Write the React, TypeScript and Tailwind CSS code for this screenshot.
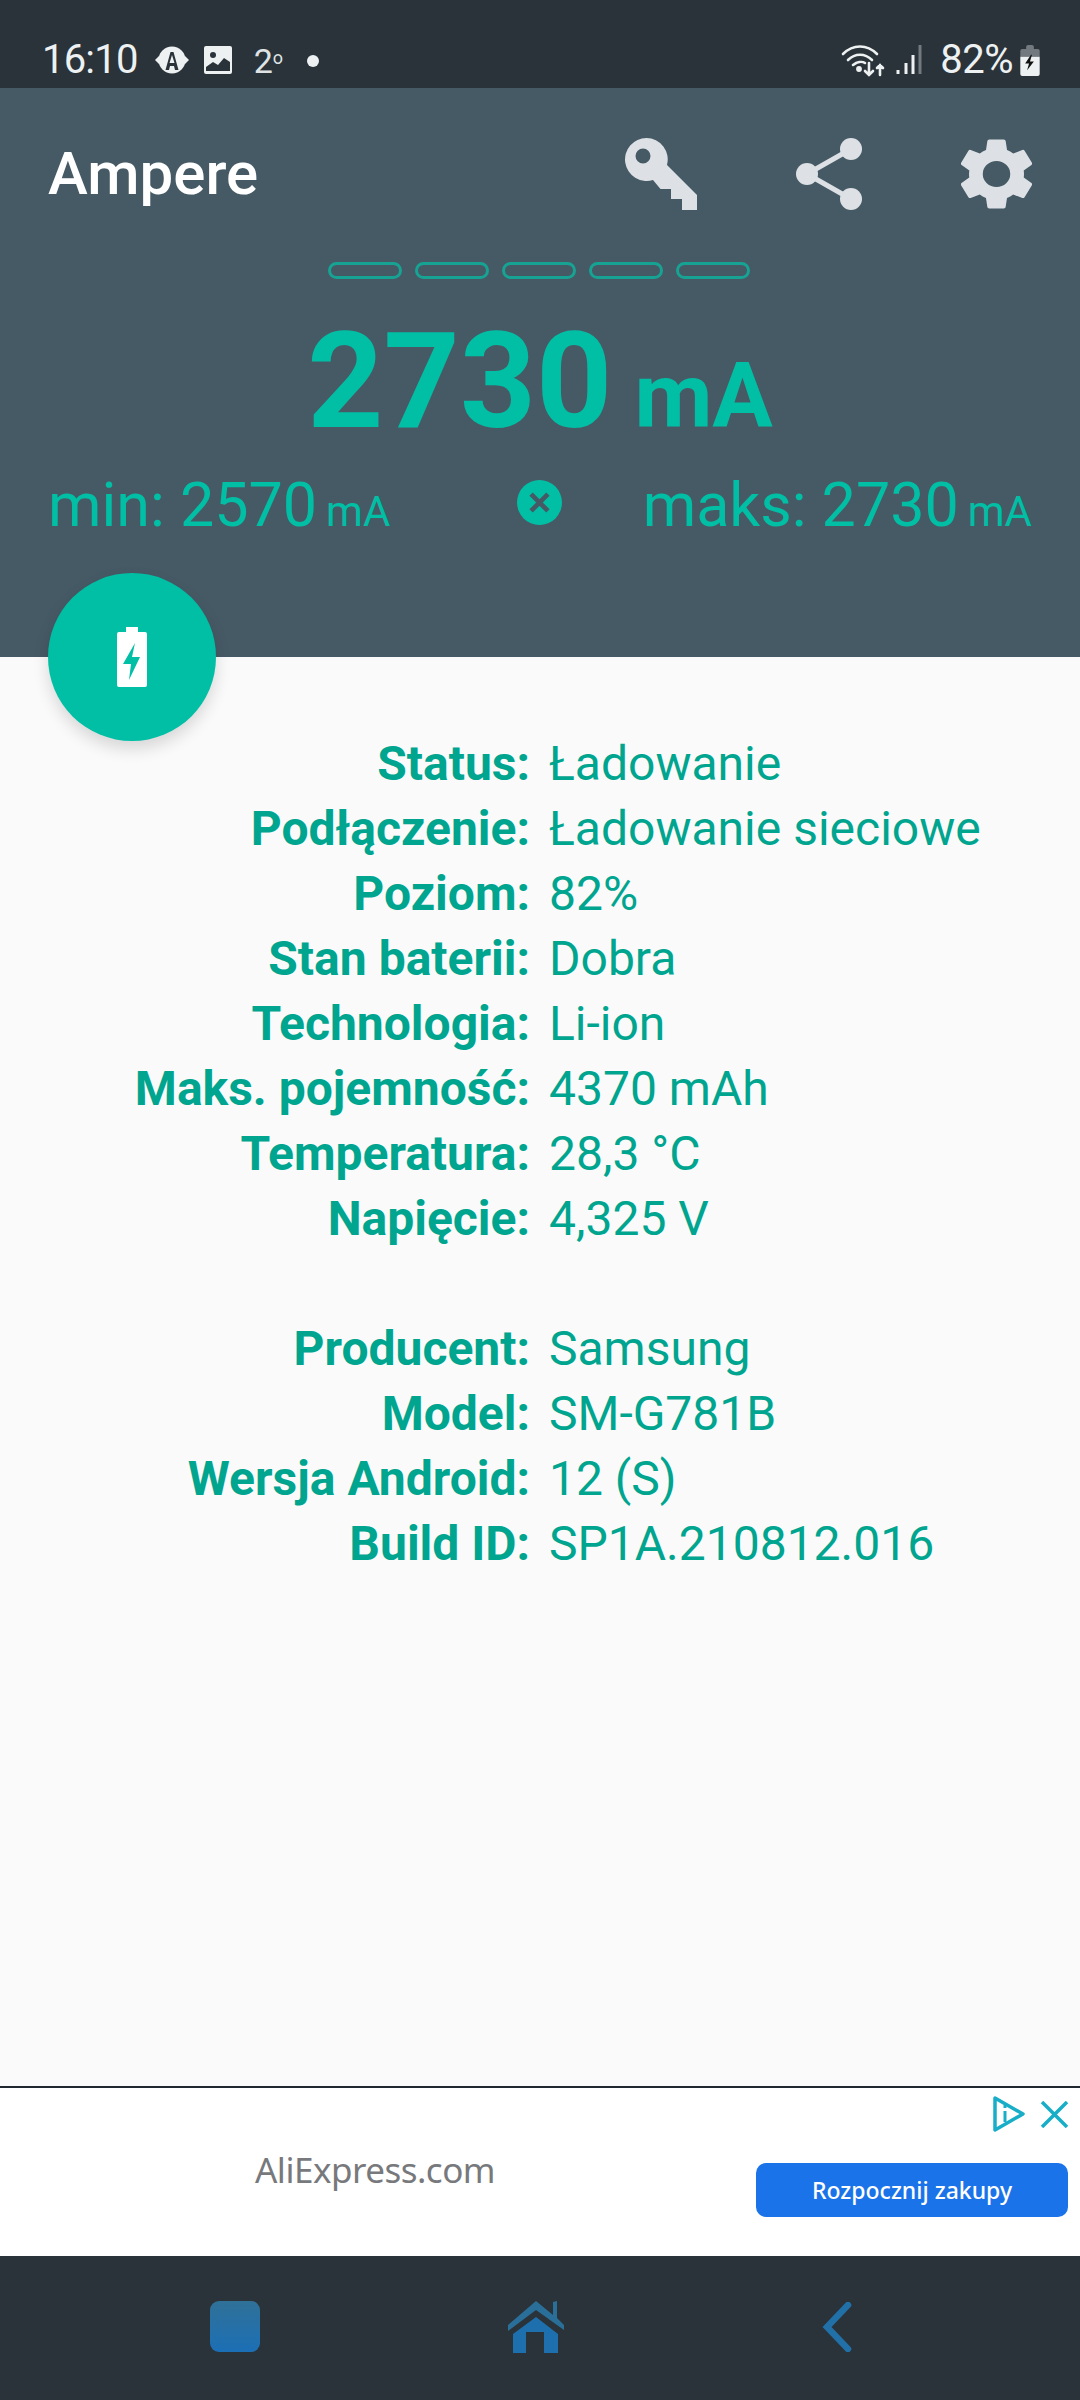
const Pill = () => (
  <div className="w-[74px] h-[17px] rounded-full border-[3px] border-[#16a394]" />
);

type RowProps = { label: string; value: string };

const Row = ({ label, value }: RowProps) => (
  <div className="flex h-[65px] items-center text-[48px] leading-none text-[#00a58f]">
    <div className="w-[530px] shrink-0 text-right font-bold">{label}</div>
    <div className="pl-[19px]">{value}</div>
  </div>
);

const batteryRows: RowProps[] = [
  { label: "Status:", value: "Ładowanie" },
  { label: "Podłączenie:", value: "Ładowanie sieciowe" },
  { label: "Poziom:", value: "82%" },
  { label: "Stan baterii:", value: "Dobra" },
  { label: "Technologia:", value: "Li-ion" },
  { label: "Maks. pojemność:", value: "4370 mAh" },
  { label: "Temperatura:", value: "28,3 °C" },
  { label: "Napięcie:", value: "4,325 V" },
];

const deviceRows: RowProps[] = [
  { label: "Producent:", value: "Samsung" },
  { label: "Model:", value: "SM-G781B" },
  { label: "Wersja Android:", value: "12 (S)" },
  { label: "Build ID:", value: "SP1A.210812.016" },
];

const StatusBar = () => (
  <div className="flex h-[88px] items-end justify-between bg-[#2a3339] pb-[5px] pl-[42px] pr-[40px] text-[#eef1f2]">
    <div className="flex items-center">
      <span className="text-[40px] leading-[46px] tracking-[-0.8px]">16:10</span>
      <svg className="ml-[17px]" width="34" height="28" viewBox="0 0 34 28">
        <circle cx="17" cy="14" r="13.5" fill="#eef1f2" />
        <path d="M0 14l4-4v8zM34 14l-4-4v8z" fill="#eef1f2" />
        <path d="M10.5 24l5-18h3l5 18h-3.5l-1-4h-4l-1 4zM14.5 17h5l-2.5-8z" fill="#2a3339" />
      </svg>
      <svg className="ml-[15px]" width="28" height="28" viewBox="0 0 28 28">
        <rect width="28" height="28" rx="2" fill="#eef1f2" />
        <circle cx="9" cy="9" r="3" fill="#2a3339" />
        <path d="M2 25v-4l7-5 5 3 6-7 6 4v9z" fill="#2a3339" />
      </svg>
      <span className="ml-[22px] mt-[2px] text-[34px] leading-none text-[#dfe3e5]">
        2<sup className="text-[18px]">o</sup>
      </span>
      <div className="ml-[24px] mt-[2px] h-[12px] w-[12px] rounded-full bg-[#eef1f2]" />
    </div>
    <div className="flex items-center">
      <svg width="44" height="34" viewBox="0 0 44 34" fill="none" stroke="#eef1f2" strokeWidth="2.6" strokeLinecap="round">
        <path d="M2 11c10-10 24-10 34 0" />
        <path d="M7 17c7-7 17-7 24 0" />
        <path d="M12 22c4-3 9-4 12-2" />
        <circle cx="18" cy="26" r="1.6" fill="#eef1f2" />
        <path d="M28 20v12M24 28l4 4 4-4M39 32v-10M36 25l3-3 3 3" />
      </svg>
      <svg className="ml-[11px]" width="26" height="30" viewBox="0 0 26 30" fill="none" strokeWidth="3">
        <path d="M2 29v-4" stroke="#eef1f2" />
        <path d="M10 29v-11" stroke="#eef1f2" />
        <path d="M17 29v-19" stroke="#eef1f2" />
        <path d="M24 29v-29" stroke="#727a7f" />
      </svg>
      <span className="ml-[18px] text-[40px] leading-[46px] tracking-[-0.5px]">82%</span>
      <svg className="ml-[7px]" width="20" height="31" viewBox="0 0 20 32">
        <path d="M6 2a2 2 0 0 1 2-2h4a2 2 0 0 1 2 2v2h4a2 2 0 0 1 2 2v6H0V6a2 2 0 0 1 2-2h4z" fill="#727a7f" />
        <path d="M0 12h20v18a2 2 0 0 1-2 2H2a2 2 0 0 1-2-2z" fill="#eef1f2" />
        <path d="M11 10L5 19h4l-2 7 7-9h-4l2-7z" fill="#111" />
      </svg>
    </div>
  </div>
);

const Header = () => (
  <div className="relative h-[569px] bg-[#465a65]">
    <div className="flex h-[172px] items-center justify-between pl-[48px] pr-[48px]">
      <span className="text-[60px] font-medium leading-none text-white">Ampere</span>
      <div className="flex items-center gap-[99px]">
        {/* key */}
        <svg width="72" height="72" viewBox="0 0 72 72">
          <path
            fillRule="evenodd"
            d="M21.5 0a21.5 21.5 0 0 1 20.5 27l30 30v15H57V61H46V51H35.5L28 42A21.5 21.5 0 1 1 21.5 0zM18 10.500a7.500 7.500 0 1 0 0 15 7.500 7.500 0 0 0 0-15z"
            fill="#dde1e5"
          />
        </svg>
        {/* share */}
        <svg width="66" height="72" viewBox="0 0 66 72">
          <path d="M55 11L11 36l44 25" fill="none" stroke="#dde1e5" strokeWidth="5" />
          <circle cx="55" cy="11" r="11" fill="#dde1e5" />
          <circle cx="11" cy="36" r="11" fill="#dde1e5" />
          <circle cx="55" cy="61" r="11" fill="#dde1e5" />
        </svg>
        {/* settings */}
        <svg width="71" height="72" viewBox="2.7 2 18.6 20" preserveAspectRatio="none">
          <path
            d="M19.14 12.94c.04-.3.06-.61.06-.94s-.02-.64-.07-.94l2.03-1.58a.5.5 0 0 0 .12-.61l-1.92-3.32a.5.5 0 0 0-.59-.22l-2.39.96a7 7 0 0 0-1.62-.94l-.36-2.54a.5.5 0 0 0-.48-.41h-3.84a.5.5 0 0 0-.47.41l-.36 2.54c-.59.24-1.13.57-1.62.94l-2.39-.96a.5.5 0 0 0-.59.22L2.74 8.87a.5.5 0 0 0 .12.61l2.03 1.58c-.05.3-.09.63-.09.94s.02.64.07.94l-2.03 1.58a.5.5 0 0 0-.12.61l1.92 3.32c.12.22.37.29.59.22l2.39-.96c.5.38 1.03.7 1.62.94l.36 2.54c.05.24.24.41.48.41h3.84c.24 0 .44-.17.47-.41l.36-2.54c.59-.24 1.13-.56 1.62-.94l2.39.96c.22.08.47 0 .59-.22l1.92-3.32a.5.5 0 0 0-.12-.61zM12 15.6A3.6 3.6 0 1 1 12 8.4a3.6 3.6 0 0 1 0 7.2z"
            fill="#dde1e5"
          />
        </svg>
      </div>
    </div>
    <div className="mt-[2px] flex justify-center gap-[13px] pr-[2px]">
      <Pill />
      <Pill />
      <Pill />
      <Pill />
      <Pill />
    </div>
    <div className="mt-[36px] flex items-baseline justify-center font-bold leading-none text-[#00bfa5]">
      <span className="text-[133px]">2730</span>
      <span className="ml-[22px] text-[90px]">mA</span>
    </div>
    <div className="mt-[27px] flex items-center justify-between px-[48px] text-[#00bfa5]">
      <div className="flex items-baseline text-[61px] leading-none">
        <span>min: 2570</span>
        <span className="ml-[9px] text-[42px]">mA</span>
      </div>
      <svg width="45" height="45" viewBox="0 0 48 48" className="ml-[46px] mt-[-6px]">
        <circle cx="24" cy="24" r="24" fill="#00bfa5" />
        <path d="M15 15l18 18M33 15L15 33" stroke="#465a65" strokeWidth="5" />
      </svg>
      <div className="flex items-baseline text-[61px] leading-none">
        <span>maks: 2730</span>
        <span className="ml-[9px] text-[42px]">mA</span>
      </div>
    </div>
    {/* floating battery button */}
    <div className="absolute left-[48px] top-[485px] flex h-[168px] w-[168px] items-center justify-center rounded-full bg-[#00bfa5] shadow-[0_8px_16px_rgba(0,0,0,0.14)]">
      <svg width="30" height="60" viewBox="0 0 30 60">
        <path d="M9 0h12v5h7a2 2 0 0 1 2 2v51a2 2 0 0 1-2 2H2a2 2 0 0 1-2-2V7a2 2 0 0 1 2-2h7z" fill="#fff" />
        <path d="M18 16L6 37h8l-2 16 11-23h-8z" fill="#00bfa5" />
      </svg>
    </div>
  </div>
);

const AdBanner = () => (
  <div className="relative flex h-[170px] items-center border-t-[2px] border-[#1f2830] bg-white">
    <div className="absolute right-[11px] top-[8px] flex items-center gap-[14px]">
      <svg width="34" height="36" viewBox="0 0 34 36" fill="none" stroke="#19aec8" strokeWidth="3.500" strokeLinejoin="round">
        <path d="M3 2l28 16L3 34z" />
        <path d="M13 15v11M13 9v3" strokeWidth="3" />
      </svg>
      <svg width="29" height="27" viewBox="0 0 29 27" stroke="#19aec8" strokeWidth="3.500">
        <path d="M2 1l25 25M27 1L2 26" />
      </svg>
    </div>
    <span className="ml-[255px] mt-[-4px] font-['Noto_Sans',sans-serif] text-[35px] tracking-[-0.5px] text-[#77797c]">
      AliExpress.com
    </span>
    <button className="ml-auto mr-[12px] mt-[36px] flex h-[54px] w-[312px] items-center justify-center rounded-[10px] bg-[#1a73e8] font-['Noto_Sans',sans-serif] text-[23px] font-medium text-white">
      Rozpocznij zakupy
    </button>
  </div>
);

const NavBar = () => (
  <div className="flex h-[144px] items-center bg-[#2a3339] pb-[3px] pl-[210px]">
    <div className="h-[51px] w-[50px] rounded-[9px] bg-gradient-to-b from-[#2f7198] to-[#1b6fb5]" />
    <svg className="ml-[248px]" width="56" height="52" viewBox="0 0 56 52">
      <path d="M28 0l17 14V1l4-1v17l7 7v5L28 9 0 30v-6z" fill="#2a6f99" />
      <path d="M28 16l22 17v19H36V31H18v21H5V33z" fill="#1d6fae" />
    </svg>
    <svg className="ml-[258px]" width="30" height="50" viewBox="0 0 30 50" fill="none">
      <path d="M26 3L5 25l21 22" stroke="#2170a8" strokeWidth="6.500" strokeLinecap="round" />
    </svg>
  </div>
);

export default function App() {
  return (
    <div className="flex h-[2400px] w-[1080px] flex-col overflow-hidden bg-[#fafafa] font-['Roboto',sans-serif]">
      <StatusBar />
      <Header />
      <div className="flex-1 pt-[74px]">
        {batteryRows.map((row) => (
          <Row key={row.label} {...row} />
        ))}
        <div className="h-[65px]" />
        {deviceRows.map((row) => (
          <Row key={row.label} {...row} />
        ))}
      </div>
      <AdBanner />
      <NavBar />
    </div>
  );
}
